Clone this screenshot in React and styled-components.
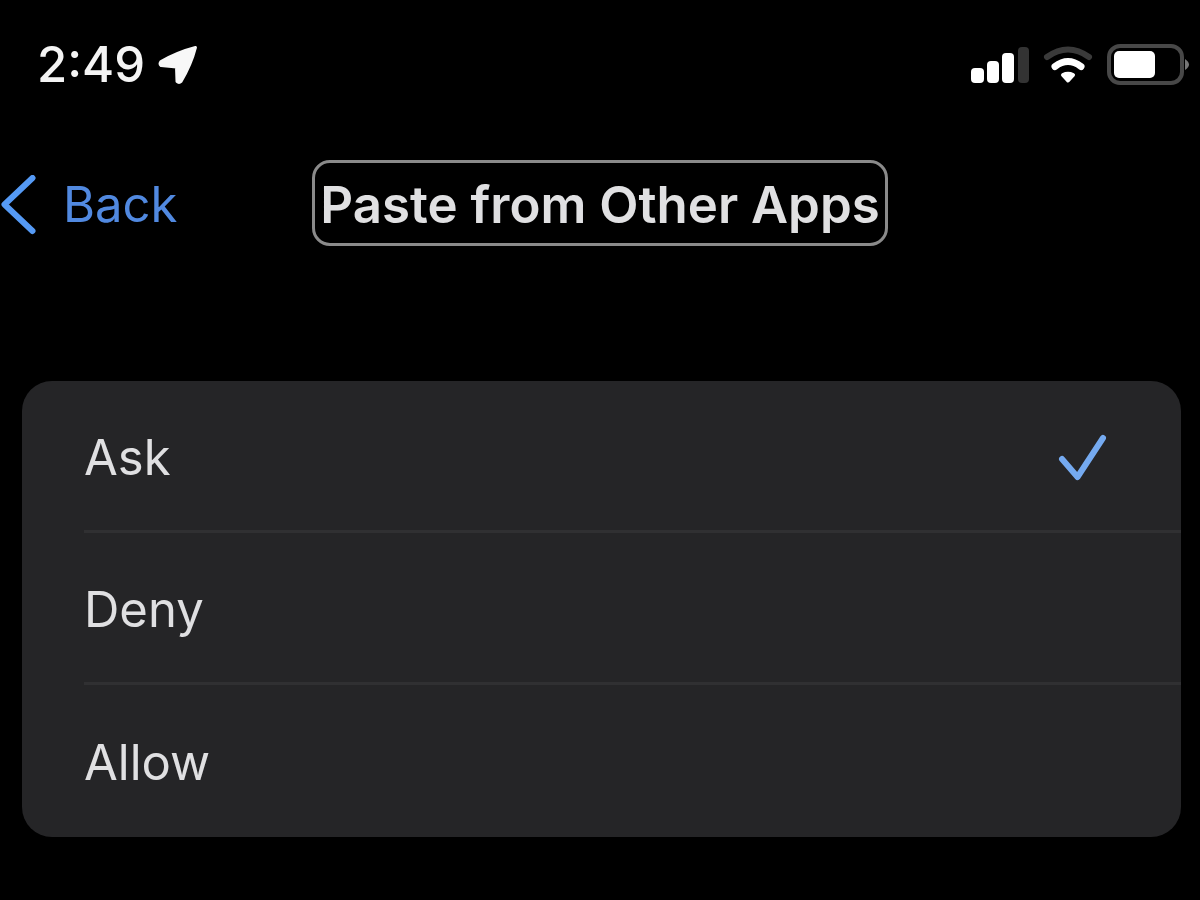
import React, {useState} from "react";
import styled, {createGlobalStyle} from "styled-components";

const GlobalStyle = createGlobalStyle`
  * {
    box-sizing: border-box;
  }
  body {
    margin: 0;
    background: #000;
    color: #e0e0e2;
    font-family: Inter, "Liberation Sans", sans-serif;
    font-size: 49px;
    line-height: 60px;
  }
`

const StatusBar = styled('header')`
  display: flex;
  align-items: center;
  justify-content: space-between;
  padding: 35px 10px 35px 37px;
`
const StatusGroup = styled('div')`
  display: flex;
  align-items: center;
  gap: 13px;
`
const Time = styled('time')`
  font-weight: 500;
  color: #f4f4f4;
`
const Icon = styled('svg')`
  display: block;
  flex: none;
`

const NavBar = styled('nav')`
  display: grid;
  grid-template-columns: 1fr auto 1fr;
  align-items: center;
  padding-top: 30px;
`
const BackLink = styled('a')`
  display: flex;
  align-items: center;
  gap: 23px;
  padding-top: 4px;
  color: #5189e0;
  text-decoration: none;
`
const Title = styled('h1')`
  margin: 0;
  padding: 12px 5px 8px;
  border: 3px solid #8a8a8a;
  border-radius: 18px;
  font-size: 51px;
  font-weight: 600;
  line-height: 60px;
`

const Options = styled('fieldset')`
  margin: 135px 19px 60px 22px;
  padding: 0;
  border: none;
  border-radius: 30px;
  background: #252527;
`
const OptionRow = styled('label')`
  display: flex;
  align-items: center;
  justify-content: space-between;
  height: 152px;
  margin-left: 62px;
  padding: 4px 73px 0 0;
  border-bottom: ${props => props.$last ? "none" : "3px solid #303032"};
  cursor: pointer;
`
const OptionInput = styled('input')`
  appearance: none;
  width: 0;
  height: 0;
  margin: 0;
`
const OptionText = styled('span')`
  flex: 1;
`

const LocationIcon = () => (
  <Icon width="40" height="40" viewBox="0 0 40 40" fill="#f8f8f8" stroke="#f8f8f8" strokeWidth="3" strokeLinejoin="round">
    <path d="M37.5 2.500 Q20 7 3 16.500 Q1 19 3 20.500 L18.500 22 L19 36.500 Q21 38.500 23 36.500 Q33 20 37.500 2.500 Z" />
  </Icon>
)

const SignalIcon = () => (
  <Icon width="60" height="38" viewBox="0 0 60 38" fill="#fff">
    <rect x="1" y="22" width="13" height="15" rx="4" />
    <rect x="17" y="15" width="12" height="22" rx="4" />
    <rect x="32" y="7" width="12" height="30" rx="4" />
    <rect x="48" y="1" width="11" height="36" rx="4" fill="#333" />
  </Icon>
)

const WifiIcon = () => (
  <Icon width="50" height="38" viewBox="0 0 50 38" fill="none" strokeLinecap="round" strokeLinejoin="round">
    <path d="M4 11 Q25 -4 46 11" stroke="#3a3a3a" strokeWidth="6" />
    <path d="M12 20.500 Q25 10.500 38 20.500" stroke="#fff" strokeWidth="7" />
    <path d="M20 29 Q25 26.500 30 29 L25 34.500 Z" fill="#fff" stroke="#fff" strokeWidth="4" />
  </Icon>
)

const BatteryIcon = () => (
  <Icon width="84" height="42" viewBox="0 0 84 42">
    <rect x="3" y="2" width="73" height="37" rx="11" fill="none" stroke="#484848" strokeWidth="4" />
    <rect x="8" y="7" width="41" height="27" rx="5" fill="#fff" />
    <path d="M79 15 Q87 20.500 79 26 Z" fill="#777" />
  </Icon>
)

const BackIcon = () => (
  <Icon width="40" height="60" viewBox="0 0 40 60" fill="none" stroke="#559af5" strokeWidth="6" strokeLinecap="round" strokeLinejoin="round">
    <path d="M32.500 3 L4.500 29.500 L32.500 56" />
  </Icon>
)

const CheckIcon = () => (
  <Icon width="50" height="48" viewBox="0 0 50 48" fill="none" stroke="#75aaf0" strokeWidth="6" strokeLinecap="round" strokeLinejoin="round">
    <path d="M4 25 L19.500 43 L45 4" />
  </Icon>
)

const options = ['Ask', 'Deny', 'Allow'];

const App = () => {
  const [selected, setSelected] = useState(options[0]);

  return(
    <>
      <GlobalStyle />
      <StatusBar>
        <StatusGroup>
          <Time>2:49</Time>
          <LocationIcon />
        </StatusGroup>
        <StatusGroup>
          <SignalIcon />
          <WifiIcon />
          <BatteryIcon />
        </StatusGroup>
      </StatusBar>
      <NavBar>
        <BackLink href="#">
          <BackIcon />
          Back
        </BackLink>
        <Title>Paste from Other Apps</Title>
      </NavBar>
      <Options aria-label="Paste from Other Apps">
        {
          options.map((option, index) => (
            <OptionRow key={option} $last={index === options.length - 1}>
              <OptionInput
                type="radio"
                name="paste"
                value={option}
                checked={option === selected}
                onChange={() => setSelected(option)}
              />
              <OptionText>{option}</OptionText>
              {option === selected && <CheckIcon />}
            </OptionRow>
          ))
        }
      </Options>
    </>
  )
}

export default App
